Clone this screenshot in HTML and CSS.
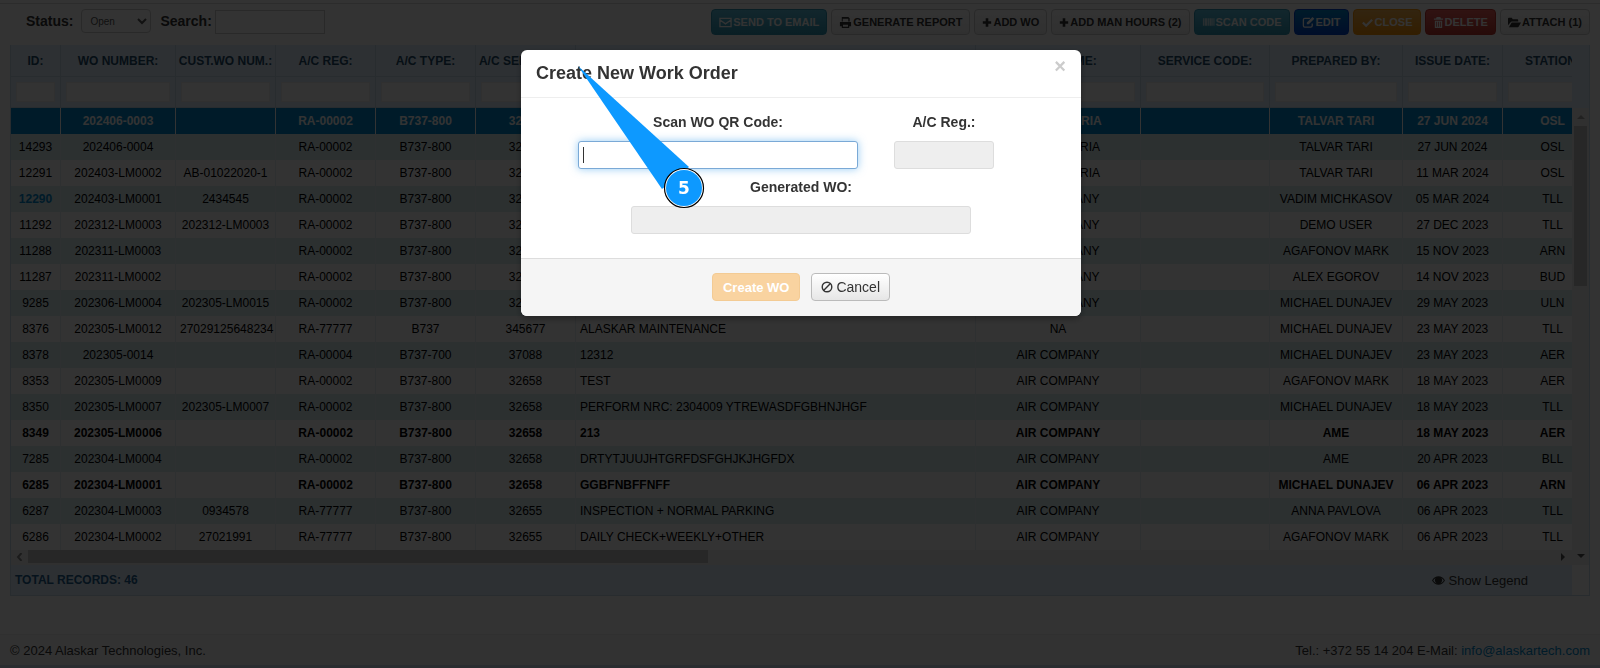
FILE: index.html
```html
<!DOCTYPE html>
<html lang="en">
<head>
  <meta charset="UTF-8" />
  <meta name="viewport" content="width=device-width, initial-scale=1.0"/>
  <title>Work Orders</title>
  <link rel="stylesheet" href="styles.css">
</head>
<body>
  <main class="page">
    <div class="toolbar">
      <div class="filters">
        <label for="status">Status:</label>
        <select id="status"><option>Open</option><option>Closed</option></select>
        <label for="search">Search:</label>
        <input type="text" id="search" />
      </div>
      <div class="actions">
        <button class="btn info"><svg viewBox="0 0 14 14"><path d="M1 2.500h12v9H1zM1.500 4.500l5.500 4 5.500-4" fill="none" stroke="currentColor" stroke-width="1.400"/></svg>SEND TO EMAIL</button>
        <button class="btn"><svg viewBox="0 0 14 14"><path d="M3 1h7l1.500 1.500V6H10V3H4v3H3zM1 6.500h12V11h-2v2H3v-2H1zM4.300 9.500v2.200h5.400V9.500z" fill="currentColor" fill-rule="evenodd"/></svg>GENERATE REPORT</button>
        <button class="btn"><svg class="plus" viewBox="0 0 10 14"><path d="M3.600 2.500h2.800v3.100h3.100v2.800H6.400v3.100H3.600V8.400H.5V5.600h3.100z" fill="currentColor"/></svg>ADD WO</button>
        <button class="btn"><svg class="plus" viewBox="0 0 10 14"><path d="M3.600 2.500h2.800v3.100h3.100v2.800H6.400v3.100H3.600V8.400H.5V5.600h3.100z" fill="currentColor"/></svg>ADD MAN HOURS (2)</button>
        <button class="btn info"><svg viewBox="0 0 14 14"><path d="M1 2.500h1.500v8H1zM3 2.500h2.500v8H3zM6 2.500h1.500v8H6zM8 2.500h2.500v8H8zM11 2.500h.8v8H11zM12.200 2.500h1.300v8h-1.300z" fill="currentColor" opacity=".7"/></svg>SCAN CODE</button>
        <button class="btn primary"><svg viewBox="0 0 14 14"><path d="M8.500 2.500H3A1.500 1.500 0 0 0 1.500 4v6.500A1.500 1.500 0 0 0 3 12h6.500a1.500 1.500 0 0 0 1.500-1.500V8" fill="none" stroke="currentColor" stroke-width="1.400"/><path d="M11.300 1l2 2-6 6H5.200V7z" fill="currentColor"/></svg>EDIT</button>
        <button class="btn warning"><svg viewBox="0 0 14 14"><path d="M2 7l3.500 3.500L12 4" fill="none" stroke="currentColor" stroke-width="2.400"/></svg>CLOSE</button>
        <button class="btn danger"><svg class="trash" viewBox="0 0 12 14"><path d="M4 1h4l.7 1.500H11V4H1V2.500h2.300zM2 5h8v8H2zM3.600 6.200v5.500h.8V6.200zm2 0v5.500h.8V6.200zm2 0v5.500h.8V6.200z" fill="currentColor" fill-rule="evenodd"/></svg>DELETE</button>
        <button class="btn"><svg viewBox="0 0 14 14"><path d="M0 10V3a1 1 0 0 1 1-1h3l1.200 1.500H10a1 1 0 0 1 1 1V6H4.200a2 2 0 0 0-1.600.9zM4 7h10l-2.600 4.500a1 1 0 0 1-.9.500H1z" fill="currentColor"/></svg>ATTACH (1)</button>
      </div>
    </div>

    <div class="grid">
      <div class="grid-view">
        <table>
          <colgroup>
            <col class="w50"><col class="w115"><col class="w100"><col class="w100"><col class="w100"><col class="w100">
            <col class="w400"><col class="w165"><col class="w129"><col class="w133"><col class="w100"><col class="w100">
          </colgroup>
          <thead>
            <tr>
              <th>ID:</th><th>WO NUMBER:</th><th>CUST.WO NUM.:</th><th>A/C REG:</th><th>A/C TYPE:</th><th>A/C SERIAL NO:</th>
              <th>DESCRIPTION:</th><th>CUST. NAME:</th><th>SERVICE CODE:</th><th>PREPARED BY:</th><th>ISSUE DATE:</th><th>STATION:</th>
            </tr>
            <tr class="search-row" id="searchRow"></tr>
          </thead>
          <tbody id="rows"></tbody>
        </table>
        <div class="hscroll">
          <svg viewBox="0 0 8 8"><path d="M5.500 0L2 4l3.500 4" class="faint"/></svg>
          <div class="track"><div class="thumb"></div></div>
          <svg class="on" viewBox="0 0 8 8"><path d="M2 0v8l4-4z"/></svg>
        </div>
        <div class="grid-footer">
          <strong>TOTAL RECORDS: 46</strong>
          <a href="#" class="legend"><svg viewBox="0 0 14 14"><path d="M0 7c3.500-6 10.500-6 14 0-3.500 6-10.500 6-14 0zm1.300 0c1 1.600 2.300 2.600 3.700 3A3.800 3.800 0 0 1 4 4.200C3 4.800 2 5.700 1.300 7zm11.400 0c-.7-1.300-1.700-2.200-2.700-2.800A3.800 3.800 0 0 1 9 10c1.400-.4 2.700-1.400 3.700-3z" fill="currentColor" fill-rule="evenodd"/></svg>Show Legend</a>
        </div>
      </div>
      <div class="grid-side">
        <div class="side-head"></div>
        <div class="vscroll">
          <svg viewBox="0 0 8 8"><path d="M0 6h8L4 2z"/></svg>
          <div class="track"><div class="thumb"></div></div>
          <svg class="on" viewBox="0 0 8 8"><path d="M0 2h8L4 6z"/></svg>
        </div>
        <div class="side-foot"></div>
      </div>
    </div>
  </main>

  <footer class="page-footer">
    <span>© 2024 Alaskar Technologies, Inc.</span>
    <span>Tel.: +372 55 14 204 E-Mail: <a href="mailto:info@alaskartech.com">info@alaskartech.com</a></span>
  </footer>

  <div class="backdrop">
    <form class="modal" role="dialog" aria-labelledby="modalTitle">
      <div class="modal-header">
        <h3 id="modalTitle">Create New Work Order</h3>
        <button type="button" class="close" aria-label="Close">×</button>
      </div>
      <div class="modal-body">
        <div class="field-row">
          <div class="field scan">
            <label for="qrCode">Scan WO QR Code:</label>
            <input type="text" id="qrCode" autofocus />
          </div>
          <div class="field reg">
            <label for="acReg">A/C Reg.:</label>
            <input type="text" id="acReg" disabled />
          </div>
        </div>
        <div class="field generated">
          <label for="generatedWo">Generated WO:</label>
          <input type="text" id="generatedWo" disabled />
        </div>
      </div>
      <div class="modal-footer">
        <button type="button" class="create" disabled>Create WO</button>
        <button type="button" class="cancel"><svg viewBox="0 0 12 12"><circle cx="6" cy="6" r="4.800"/><path d="M2.600 9.400l6.800-6.800"/></svg>Cancel</button>
      </div>
      <!-- step marker -->
      <svg class="marker" viewBox="0 0 130 146">
        <path class="beam" d="M2 2L113 103 86 125z"/>
        <circle class="ring" cx="108" cy="124" r="19.500"/>
        <circle class="dot" cx="108" cy="124" r="18"/>
        <text x="108" y="130">5</text>
      </svg>
    </form>
  </div>

  <script>
    // id, wo, customer wo, reg, type, serial, description, company, service, prepared, date, station, class
    const rows = [
      ["", "202406-0003", "", "RA-00002", "B737-800", "32658", "", "AIR BULGARIA", "", "TALVAR TARI", "27 JUN 2024", "OSL", "selected"],
      ["14293", "202406-0004", "", "RA-00002", "B737-800", "32658", "", "AIR BULGARIA", "", "TALVAR TARI", "27 JUN 2024", "OSL"],
      ["12291", "202403-LM0002", "AB-01022020-1", "RA-00002", "B737-800", "32658", "", "AIR BULGARIA", "", "TALVAR TARI", "11 MAR 2024", "OSL"],
      ["12290", "202403-LM0001", "2434545", "RA-00002", "B737-800", "32658", "", "AIR COMPANY", "", "VADIM MICHKASOV", "05 MAR 2024", "TLL", "marked"],
      ["11292", "202312-LM0003", "202312-LM0003", "RA-00002", "B737-800", "32658", "", "AIR COMPANY", "", "DEMO USER", "27 DEC 2023", "TLL"],
      ["11288", "202311-LM0003", "", "RA-00002", "B737-800", "32658", "", "AIR COMPANY", "", "AGAFONOV MARK", "15 NOV 2023", "ARN"],
      ["11287", "202311-LM0002", "", "RA-00002", "B737-800", "32658", "", "AIR COMPANY", "", "ALEX EGOROV", "14 NOV 2023", "BUD"],
      ["9285", "202306-LM0004", "202305-LM0015", "RA-00002", "B737-800", "32658", "", "AIR COMPANY", "", "MICHAEL DUNAJEV", "29 MAY 2023", "ULN"],
      ["8376", "202305-LM0012", "27029125648234", "RA-77777", "B737", "345677", "ALASKAR MAINTENANCE", "NA", "", "MICHAEL DUNAJEV", "23 MAY 2023", "TLL"],
      ["8378", "202305-0014", "", "RA-00004", "B737-700", "37088", "12312", "AIR COMPANY", "", "MICHAEL DUNAJEV", "23 MAY 2023", "AER"],
      ["8353", "202305-LM0009", "", "RA-00002", "B737-800", "32658", "TEST", "AIR COMPANY", "", "AGAFONOV MARK", "18 MAY 2023", "AER"],
      ["8350", "202305-LM0007", "202305-LM0007", "RA-00002", "B737-800", "32658", "PERFORM NRC: 2304009 YTREWASDFGBHNJHGF", "AIR COMPANY", "", "MICHAEL DUNAJEV", "18 MAY 2023", "TLL"],
      ["8349", "202305-LM0006", "", "RA-00002", "B737-800", "32658", "213", "AIR COMPANY", "", "AME", "18 MAY 2023", "AER", "bold"],
      ["7285", "202304-LM0004", "", "RA-00002", "B737-800", "32658", "DRTYTJUUJHTGRFDSFGHJKJHGFDX", "AIR COMPANY", "", "AME", "20 APR 2023", "BLL"],
      ["6285", "202304-LM0001", "", "RA-00002", "B737-800", "32658", "GGBFNBFFNFF", "AIR COMPANY", "", "MICHAEL DUNAJEV", "06 APR 2023", "ARN", "bold"],
      ["6287", "202304-LM0003", "0934578", "RA-77777", "B737-800", "32655", "INSPECTION + NORMAL PARKING", "AIR COMPANY", "", "ANNA PAVLOVA", "06 APR 2023", "TLL"],
      ["6286", "202304-LM0002", "27021991", "RA-77777", "B737-800", "32655", "DAILY CHECK+WEEKLY+OTHER", "AIR COMPANY", "", "AGAFONOV MARK", "06 APR 2023", "TLL"]
    ];

    const body = document.getElementById("rows");
    rows.forEach(r => {
      const tr = document.createElement("tr");
      if (r[12]) tr.className = r[12];
      r.slice(0, 12).forEach(text => {
        const td = document.createElement("td");
        td.textContent = text;
        tr.append(td);
      });
      body.append(tr);
    });

    const searchRow = document.getElementById("searchRow");
    document.querySelectorAll("thead tr:first-child th").forEach(h => {
      const th = document.createElement("th");
      const input = document.createElement("input");
      input.type = "text";
      input.setAttribute("aria-label", h.textContent);
      th.append(input);
      searchRow.append(th);
    });

    document.getElementById("qrCode").focus();
  </script>
</body>
</html>
```
FILE: styles.css
```css
* { box-sizing: border-box; }

body {
  margin: 0;
  min-height: 100vh;
  display: flex;
  flex-direction: column;
  font-family: "Liberation Sans", Arial, sans-serif;
  font-size: 13px;
  color: #333;
  background: #fff;
  border-bottom: 3px solid #d0e2ee;
  overflow: hidden;
}

input, select, button { font-family: inherit; }

.page {
  flex: 1;
  margin-top: 3px;
  padding: 5px 10px 0;
  border-top: 1px solid #ddd;
}

.toolbar {
  display: flex;
  justify-content: space-between;
  height: 36px;
}

.filters {
  display: flex;
  align-items: flex-start;
  padding-left: 16px;
}

.filters label {
  font-size: 14px;
  font-weight: bold;
  line-height: 24px;
}

.filters select {
  width: 70px;
  height: 24px;
  margin: 0 9px 0 8px;
  padding: 0 4px;
  border: 1px solid #ccc;
  border-radius: 4px;
  background: #fff;
  color: #555;
  font-size: 10px;
}

.filters input {
  width: 110px;
  height: 24px;
  margin: 1px 0 0 3px;
  border: 1px solid #ccc;
}

.actions {
  display: flex;
  align-items: flex-start;
  gap: 4px;
}

.btn {
  display: flex;
  align-items: center;
  gap: 1px;
  height: 26px;
  padding: 0 7px;
  border: 1px solid #ccc;
  border-radius: 4px;
  background: linear-gradient(#fff, #f0f0f0);
  color: #333;
  font-size: 11px;
  font-weight: bold;
  white-space: nowrap;
}

.btn svg { width: 13px; height: 13px; }
.btn .plus { width: 10px; }
.btn .trash { width: 11px; }

.btn.info { background: linear-gradient(#5bc0de, #2f96b4); border-color: #2f96b4; color: #fff; }
.btn.primary { background: linear-gradient(#0088cc, #0044cc); border-color: #0044cc; color: #fff; }
.btn.warning { background: linear-gradient(#fbb450, #f89406); border-color: #f89406; color: #fff; }
.btn.danger { background: linear-gradient(#ee5f5b, #bd362f); border-color: #bd362f; color: #fff; }

/* grid */
.grid {
  display: flex;
  border: 1px solid #c5dbec;
  border-top: 0;
}

.grid-view {
  flex: 1;
  min-width: 0;
  overflow: hidden;
}

.grid table {
  table-layout: fixed;
  width: 1592px;
  border-collapse: separate;
  border-spacing: 0;
  font-size: 12px;
}

.w50 { width: 50px; }
.w100 { width: 100px; }
.w115 { width: 115px; }
.w129 { width: 129px; }
.w133 { width: 133px; }
.w165 { width: 165px; }
.w400 { width: 400px; }

th {
  height: 32px;
  padding: 0;
  background: #dfeffc;
  border-right: 1px solid #c5dbec;
  border-bottom: 1px solid #c5dbec;
  color: #1f4a6b;
  white-space: nowrap;
}

.search-row th { height: 31px; padding: 0 5px; }

.search-row input {
  display: block;
  width: 100%;
  height: 20px;
  border: 1px solid #eee;
}

td {
  height: 26px;
  padding: 0 4px;
  overflow: hidden;
  border-right: 1px solid #e6eef2;
  color: #000;
  text-align: center;
  white-space: nowrap;
}

td:nth-child(7) { text-align: left; }

tbody tr:nth-child(even) td { background: #d9edf0; }

.bold td, .selected td { font-weight: bold; }
.selected td { background: #0088cc; color: #fff; border-right-color: #fff; }
.marked td:first-child { color: #0088cc; font-weight: bold; }

.hscroll, .vscroll {
  display: flex;
  align-items: center;
  background: #f1f1f1;
}

.hscroll { height: 15px; padding: 0 5px 2px; gap: 4px; }
.hscroll .track { flex: 1; height: 13px; }
.hscroll .thumb { width: 44.5%; height: 100%; background: #c1c1c1; }

.hscroll svg, .vscroll svg { width: 8px; height: 8px; fill: #a3a3a3; }
.hscroll .on, .vscroll .on { fill: #505050; }
.hscroll .faint { fill: none; stroke: #888; stroke-width: 2; }

.grid-footer {
  display: flex;
  align-items: center;
  justify-content: space-between;
  height: 30px;
  padding: 0 44px 0 4px;
  background: #dfeffc;
}

.grid-footer strong { color: #1f5f8f; font-size: 12px; }

.legend {
  display: flex;
  align-items: center;
  gap: 3px;
  color: #333;
  text-decoration: none;
}

.legend svg { width: 13px; height: 13px; }

.grid-side {
  display: flex;
  flex-direction: column;
  width: 17px;
}

.side-head { height: 63px; background: #dfeffc; }
.side-foot { height: 30px; background: #fff; }

.vscroll { flex: 1; flex-direction: column; padding: 5px 0; gap: 5px; }
.vscroll .track { flex: 1; width: 13px; }
.vscroll .thumb { width: 100%; height: 38%; background: #c1c1c1; }

.page-footer {
  display: flex;
  justify-content: space-between;
  padding: 8px 10px 7px;
  border-top: 1px solid #eee;
  background: #fafafa;
  line-height: 15px;
}

.page-footer a { color: #0088cc; text-decoration: none; }

/* modal */
.backdrop {
  position: fixed;
  inset: 0;
  display: flex;
  align-items: flex-start;
  justify-content: center;
  padding: 50px 0 0 2px;
  background: rgba(0,0,0,0.8);
}

.modal {
  position: relative;
  width: 560px;
  border-radius: 6px;
  background: #fff;
  box-shadow: 0 3px 7px rgba(0,0,0,0.3);
}

.modal-header {
  display: flex;
  justify-content: space-between;
  align-items: flex-start;
  padding: 8px 15px 9px;
  border-bottom: 1px solid #eee;
}

.modal h3 {
  margin: 0;
  font-size: 18px;
  line-height: 30px;
}

.close {
  padding: 0;
  border: 0;
  background: none;
  color: #ccc;
  font-size: 20px;
  font-weight: bold;
  line-height: 16px;
}

.modal-body { padding: 14px 57px 24px; }

.field-row {
  display: flex;
  gap: 36px;
}

.field {
  display: flex;
  flex-direction: column;
  text-align: center;
}

.scan { width: 280px; }
.reg { width: 100px; }
.generated { width: 340px; margin: 8px auto 0; }

.field label {
  margin-bottom: 9px;
  font-size: 14px;
  font-weight: bold;
  line-height: 20px;
}

.field input {
  width: 100%;
  height: 28px;
  padding: 4px;
  border: 1px solid #ccc;
  border-radius: 3px;
  font-size: 14px;
}

.field input:disabled { background: #eee; border-color: #ddd; }

.field input:focus {
  outline: 0;
  border-color: #7aa9d6;
  background: #fff linear-gradient(#333, #333) 4px center / 1px 16px no-repeat;
  box-shadow: 0 0 8px rgba(82,168,236,0.6);
  caret-color: transparent;
}

.modal-footer {
  display: flex;
  justify-content: center;
  gap: 11px;
  padding: 14px 15px 15px;
  border-top: 1px solid #ddd;
  border-radius: 0 0 6px 6px;
  background: #f5f5f5;
}

.create, .cancel {
  height: 28px;
  border-radius: 4px;
}

.create {
  padding: 0 10px;
  border: 1px solid #f3cb94;
  background: #f9d3a0;
  color: #fff;
  font-size: 13px;
  font-weight: bold;
}

.cancel {
  display: flex;
  align-items: center;
  gap: 3px;
  padding: 0 9px;
  border: 1px solid #bbb;
  background: linear-gradient(#fff, #e6e6e6);
  color: #333;
  font-size: 14px;
}

.cancel svg {
  width: 12px;
  height: 12px;
  fill: none;
  stroke: #333;
  stroke-width: 1.4;
}

.marker {
  position: absolute;
  left: 55px;
  top: 14px;
  width: 130px;
  height: 146px;
  pointer-events: none;
}

.beam, .dot { fill: #0d99ff; }
.ring { fill: #fff; stroke: #000; stroke-width: 1.2; }

.marker text {
  fill: #fff;
  font: bold 17px "DejaVu Sans", sans-serif;
  text-anchor: middle;
}
```
